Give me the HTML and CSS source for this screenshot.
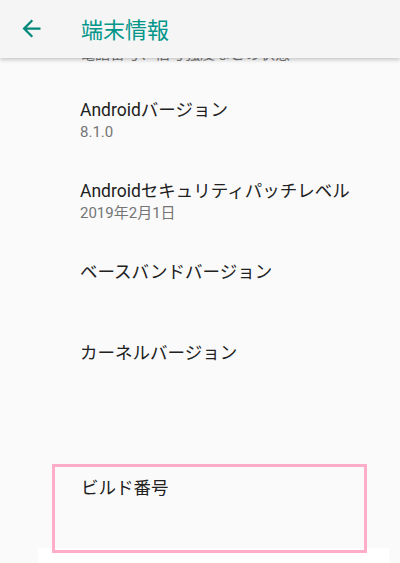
FILE: index.html
```html
<html>
  <head>
    <meta name="viewport" content="width=device-width, initial-scale=1"/>
    <link rel="stylesheet" href="styles.css">
  </head>
  <body>
    <div class="screen">
      <div class="app-bar">
        <svg class="back-icon" viewBox="0 0 24 24" width="27" height="27">
          <path d="M20 11H7.83l5.59-5.59L12 4l-8 8 8 8 1.41-1.41L7.83 13H20v-2z"/>
        </svg>
        <h1 class="app-title">端末情報</h1>
      </div>

      <div class="peek">
        <p class="summary">電話番号、信号強度などの状態</p>
      </div>

      <div class="pref-list">
        <div class="pref">
          <p class="title">Androidバージョン</p>
          <p class="summary">8.1.0</p>
        </div>
        <div class="pref">
          <p class="title">Androidセキュリティパッチレベル</p>
          <p class="summary">2019年2月1日</p>
        </div>
        <div class="pref">
          <p class="title">ベースバンドバージョン</p>
        </div>
        <div class="pref pref-tall">
          <p class="title">カーネルバージョン</p>
        </div>
        <div class="highlight">
          <p class="title">ビルド番号</p>
        </div>
        <div class="footer-strip"></div>
      </div>
    </div>
  </body>
</html>
```

FILE: styles.css
```css
body {
  margin: 0;
  font-family: Roboto, "Noto Sans CJK JP", sans-serif;
  background-color: #fafafa;
}

.screen {
  display: flex;
  flex-direction: column;
  height: 563px;
  overflow: hidden;
  background-color: #fafafa;
}

.app-bar {
  position: relative;
  z-index: 2;
  display: flex;
  align-items: center;
  flex-shrink: 0;
  height: 56px;
  padding-bottom: 2px;
  background-color: #f5f5f5;
  box-shadow: 0 2px 4px rgba(0,0,0,.2);
}

.back-icon {
  margin-left: 18px;
  fill: #00897b;
}

.app-title {
  margin: 0 0 0 36px;
  font-size: 22px;
  font-weight: 400;
  color: #00968a;
}

p {
  margin: 0;
}

/* bottom of the row that has scrolled under the bar */
.peek {
  display: flex;
  flex-direction: column;
  justify-content: flex-end;
  flex-shrink: 0;
  height: 6px;
  overflow: hidden;
  padding-left: 80px;
}

.pref-list {
  display: flex;
  flex-direction: column;
  padding-top: 35px;
}

.pref {
  height: 81px;
  padding-left: 80px;
  flex-shrink: 0;
}

.pref-tall {
  height: 122px;
}

.title {
  font-size: 17.5px;
  line-height: 23px;
  color: #212121;
}

.summary {
  font-size: 15px;
  line-height: 20px;
  color: #757575;
}

.highlight {
  position: relative;
  z-index: 1;
  flex-shrink: 0;
  width: 315px;
  height: 89px;
  margin-left: 52px;
  padding: 10px 0 0 26px;
  box-sizing: border-box;
  border: 3px solid #ffadc9;
}

.footer-strip {
  flex-shrink: 0;
  width: 351px;
  height: 40px;
  margin: -5px 0 0 38px;
  background-color: #fff;
}
```
